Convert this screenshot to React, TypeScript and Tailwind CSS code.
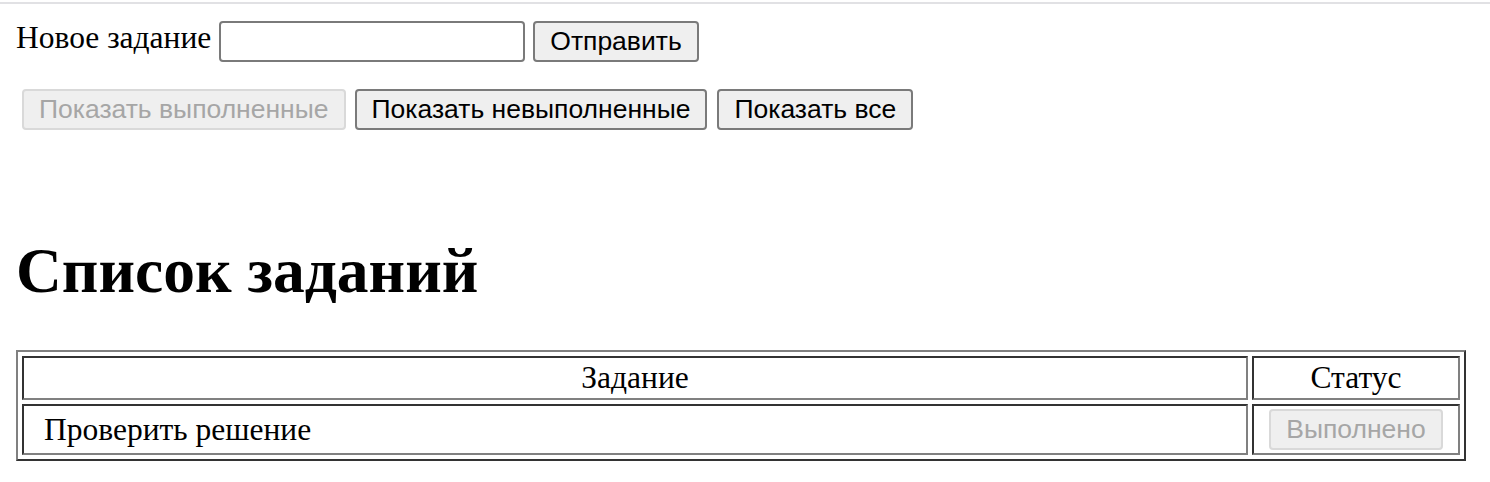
import React from "react";

export default function App() {
  return (
    <div className="w-[1490px] h-[482px] bg-white text-black overflow-hidden" style={{ fontFamily: '"Liberation Serif", "Times New Roman", serif' }}>
      <div className="mt-[2px] h-[2px] bg-[#e1e1e4]" />
      <div className="ml-[16px] mt-[16px] flex items-start">
        <span className="text-[31.5px] leading-[36px]">Новое задание</span>
        <input
          type="text"
          className="ml-[8px] mt-[1px] h-[41px] w-[306px] rounded-[4px] border-2 border-[#7a7a7a] bg-white outline-none"
        />
        <button
          className="ml-[8px] mt-[1px] h-[41px] rounded-[4px] border-2 border-[#7a7a7a] bg-[#efefef] px-[15px] text-[26.5px] leading-none text-black"
          style={{ fontFamily: '"Liberation Sans", Arial, sans-serif' }}
        >
          Отправить
        </button>
      </div>
      <div className="ml-[22px] mt-[27px] flex items-start" style={{ fontFamily: '"Liberation Sans", Arial, sans-serif' }}>
        <button
          disabled
          className="h-[41px] rounded-[4px] border-2 border-[#d9d9d9] bg-[#efefef] px-[15px] text-[26.5px] leading-none text-[#a6a6a6]"
        >
          Показать выполненные
        </button>
        <button className="ml-[9px] h-[41px] rounded-[4px] border-2 border-[#7a7a7a] bg-[#efefef] px-[15px] text-[26.5px] leading-none text-black">
          Показать невыполненные
        </button>
        <button className="ml-[10px] h-[41px] rounded-[4px] border-2 border-[#7a7a7a] bg-[#efefef] px-[15px] text-[26.5px] leading-none text-black">
          Показать все
        </button>
      </div>
      <h1 className="ml-[16px] mt-[104px] text-[63.5px] font-bold leading-[74px]">Список заданий</h1>
      <div className="ml-[16px] mt-[42px] w-[1450px] border-2 border-t-[#808080] border-l-[#808080] border-b-[#333333] border-r-[#333333] p-[4px]">
        <div className="grid grid-cols-[1226px_208px] gap-[4px]">
          <div className="flex h-[44px] items-center justify-center border-2 border-t-[#333333] border-l-[#333333] border-b-[#808080] border-r-[#808080] text-[31.5px] leading-[36px]">
            Задание
          </div>
          <div className="flex h-[44px] items-center justify-center border-2 border-t-[#333333] border-l-[#333333] border-b-[#808080] border-r-[#808080] text-[31.5px] leading-[36px]">
            Статус
          </div>
          <div className="flex h-[51px] items-center border-2 border-t-[#333333] border-l-[#333333] border-b-[#808080] border-r-[#808080] pl-[20px] text-[31.5px] leading-[36px]">
            Проверить решение
          </div>
          <div className="flex h-[51px] items-center justify-center border-2 border-t-[#333333] border-l-[#333333] border-b-[#808080] border-r-[#808080]">
            <button
              disabled
              className="h-[41px] rounded-[4px] border-2 border-[#d9d9d9] bg-[#efefef] px-[15px] text-[26.5px] leading-none text-[#a6a6a6]"
              style={{ fontFamily: '"Liberation Sans", Arial, sans-serif' }}
            >
              Выполнено
            </button>
          </div>
        </div>
      </div>
    </div>
  );
}
